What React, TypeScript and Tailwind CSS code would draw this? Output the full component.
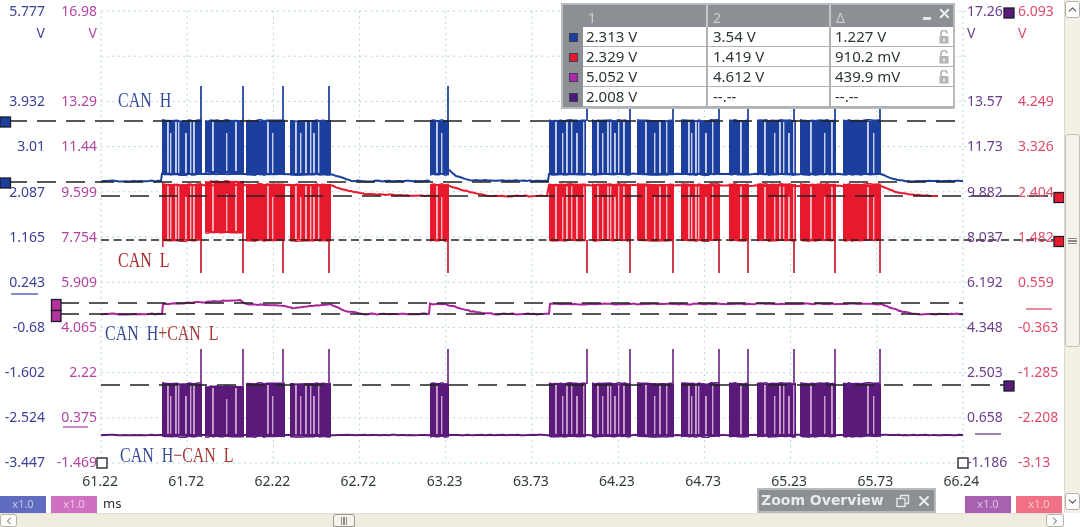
import { ChevronDown, ChevronLeft, ChevronRight, ChevronUp, X } from "lucide-react";

type Burst = { x0: number; x1: number; spike?: number; slits: number[]; lift?: number };

const bursts: Burst[] = [
  { x0: 162, x1: 202, spike: 201, slits: [167, 170, 175, 178, 185, 190, 193] },
  { x0: 205, x1: 244, spike: 243, slits: [212, 226, 235], lift: 1 },
  { x0: 246, x1: 285, spike: 283, slits: [267, 272] },
  { x0: 290, x1: 331, spike: 329, slits: [295, 300, 305, 310, 313, 318] },
  { x0: 430, x1: 449, spike: 448, slits: [436, 441] },
  { x0: 549, x1: 586, spike: 587, slits: [555, 562, 566, 571, 576, 583] },
  { x0: 592, x1: 631, spike: 630, slits: [597, 602, 607, 610, 614, 618, 623] },
  { x0: 637, x1: 674, spike: 673, slits: [645, 654, 659, 666] },
  { x0: 681, x1: 720, spike: 719, slits: [688, 691, 695, 698, 705, 712] },
  { x0: 729, x1: 749, spike: 748, slits: [740] },
  { x0: 757, x1: 796, spike: 794, slits: [764, 774, 779, 783, 788, 793] },
  { x0: 800, x1: 836, spike: 835, slits: [810, 824, 831] },
  { x0: 843, x1: 881, spike: 880, slits: [867, 873] },
];

const noise = (i: number) => {
  const n = Math.sin(i * 12.9898) * 43758.5453;
  return n - Math.floor(n) - 0.5;
};

// sample a line through the knots with a bit of wobble, the trace is never clean
const wobble = (pts: number[][], amp = 0.9) => {
  const out: string[] = [];
  pts.forEach((p, k) => {
    const q = pts[k + 1];
    if (!q) {
      out.push(`${p[0]},${p[1]}`);
      return;
    }
    for (let x = p[0]; x < q[0]; x += 3) {
      const y = p[1] + ((q[1] - p[1]) * (x - p[0])) / (q[0] - p[0]);
      out.push(`${x},${(y + noise(x + k) * amp).toFixed(1)}`);
    }
  });
  return out.join(" ");
};

const gridX = Array.from({ length: 11 }, (_, i) => 101 + i * 86.2);
const gridY = Array.from({ length: 11 }, (_, i) => 11 + i * 45.2);

const leftBlue = ["5.777", "", "3.932", "3.01", "2.087", "1.165", "0.243", "-0.68", "-1.602", "-2.524", "-3.447"];
const leftPink = ["16.98", "", "13.29", "11.44", "9.599", "7.754", "5.909", "4.065", "2.22", "0.375", "-1.469"];
const rightPurple = ["17.26", "", "13.57", "11.73", "9.882", "8.037", "6.192", "4.348", "2.503", "0.658", "-1.186"];
const rightRed = ["6.093", "", "4.249", "3.326", "2.404", "1.482", "0.559", "-0.363", "-1.285", "-2.208", "-3.13"];

const times = ["61.22", "61.72", "62.22", "62.72", "63.23", "63.73", "64.23", "64.73", "65.23", "65.73", "66.24"];

const rows = [
  { color: "bg-[#1c3f9e]", a: "2.313 V", b: "3.54 V", c: "1.227 V", lock: true },
  { color: "bg-[#e8192c]", a: "2.329 V", b: "1.419 V", c: "910.2 mV", lock: true },
  { color: "bg-[#b02aa8]", a: "5.052 V", b: "4.612 V", c: "439.9 mV", lock: true },
  { color: "bg-[#4a1a78]", a: "2.008 V", b: "--.--", c: "--.--", lock: false },
];

function AxisColumn({ values, className, unit }: { values: string[]; className: string; unit?: boolean }) {
  return (
    <div className={`flex shrink-0 flex-col text-[14px] leading-[22px] ${className}`}>
      {values.map((v, i) => (
        <div key={i} className="h-[45.15px] shrink-0 last:h-[22px]">
          <div>{v || "\u00a0"}</div>
          {unit && i === 0 && <div>V</div>}
        </div>
      ))}
    </div>
  );
}

function Pill({ className }: { className: string }) {
  return (
    <div className={`flex h-[17px] w-[46px] items-center justify-center text-[11px] text-white/60 ${className}`}>x1.0</div>
  );
}

function Lock() {
  return (
    <svg width="10" height="14" viewBox="0 0 10 14" className="shrink-0">
      <path d="M2 6V3.5a3 3 0 0 1 6 0" fill="none" stroke="#b4b4b4" strokeWidth="1.6" />
      <rect x="0.5" y="6" width="9" height="7.5" fill="#b4b4b4" />
      <rect x="4" y="8.5" width="2" height="3" fill="#e8e8e8" />
    </svg>
  );
}

function Trace({
  top,
  bottom,
  fill,
  slit,
  spikeTo,
  spikeColor,
  lift,
}: {
  top: number;
  bottom: number;
  fill: string;
  slit: string;
  spikeTo: number;
  spikeColor: string;
  lift: [number, number];
}) {
  return (
    <g>
      {bursts.map((b) => {
        const t = top + (b.lift ? lift[0] : 0);
        const e = bottom + (b.lift ? lift[1] : 0);
        const up = spikeTo < t;
        return (
          <g key={b.x0}>
            <rect x={b.x0} y={t} width={b.x1 - b.x0} height={e - t} fill={fill} />
            {b.slits.map((s, i) => (
              <rect
                key={s}
                x={s}
                y={i % 3 === 1 ? t + 12 : t + 1}
                width={i % 2 ? 1.4 : 1.9}
                height={e - t - (i % 3 === 1 ? 13 : 2)}
                fill={slit}
              />
            ))}
            <polyline fill="none" stroke={fill} strokeWidth="1.6" points={wobble([[b.x0, t - 0.5], [b.x1, t - 0.5]], 1.4)} />
            <polyline fill="none" stroke={fill} strokeWidth="1.6" points={wobble([[b.x0, e + 0.5], [b.x1, e + 0.5]], 1.4)} />
            {b.spike && (
              <rect
                x={b.spike - 0.9}
                y={up ? spikeTo : e}
                width="1.8"
                height={up ? t - spikeTo : spikeTo - e}
                fill={spikeColor}
              />
            )}
          </g>
        );
      })}
    </g>
  );
}

function Plot() {
  return (
    <svg width="866" height="473" viewBox="100 0 866 473" className="shrink-0 overflow-visible">
      {gridY.map((y) => (
        <line key={y} x1="101" x2="968" y1={y} y2={y} stroke="#b4d6dd" strokeDasharray="2 3.5" />
      ))}
      {gridX.map((x) => (
        <line key={x} x1={x} x2={x} y1="11" y2="463" stroke="#b4d6dd" strokeDasharray="2 3.5" />
      ))}

      {/* CAN H */}
      <Trace top={121} bottom={174} fill="#1c3f9e" slit="#c6d0ea" spikeTo={86} spikeColor="#24479f" lift={[0, -2]} />
      <polyline
        fill="none"
        stroke="#1c3f9e"
        strokeWidth="2"
        points={wobble([[101, 181], [162, 181], [162, 174], [330, 174], [340, 177], [352, 181], [430, 181]])}
      />
      <polyline fill="none" stroke="#1c3f9e" strokeWidth="2" points={wobble([[449, 170], [456, 176], [470, 180], [549, 181], [549, 174], [881, 174], [892, 179], [905, 181], [963, 181]])} />

      {/* CAN L */}
      <Trace top={185} bottom={240} fill="#e8192c" slit="#f3b4bb" spikeTo={273} spikeColor="#c9283e" lift={[-3, -8]} />
      <polyline fill="none" stroke="#e8192c" strokeWidth="2" points={wobble([[162, 185], [330, 185], [345, 190], [365, 194], [430, 196]])} />
      <polyline fill="none" stroke="#e8192c" strokeWidth="2" points={wobble([[449, 186], [470, 192], [490, 196], [549, 196], [549, 185], [881, 186], [895, 192], [915, 195], [938, 196]])} />
      <rect x="162" y="240" width="1.6" height="7" fill="#c9283e" />

      {/* CAN H+CAN L */}
      <polyline
        fill="none"
        stroke="#a8259c"
        strokeWidth="2"
        points={wobble([[101, 314], [162, 314], [163, 304], [205, 302], [240, 300], [246, 304], [285, 306], [292, 308], [330, 304], [345, 311], [365, 314], [429, 314], [430, 304], [445, 304], [470, 311], [495, 314], [549, 314], [550, 304], [881, 304], [900, 311], [915, 314], [963, 314]])}
      />

      {/* CAN H-CAN L */}
      <Trace top={384} bottom={436} fill="#5a1a7a" slit="#c9a0cc" spikeTo={349} spikeColor="#7c3a90" lift={[3, 0]} />
      <polyline fill="none" stroke="#5a1a7a" strokeWidth="2" points={wobble([[101, 435], [963, 435]], 0.6)} />

      {/* cursors */}
      <g stroke="#222" strokeWidth="1.5" fill="none">
        <line x1="8" x2="963" y1="121" y2="121" strokeDasharray="19 10" />
        <line x1="8" x2="963" y1="182" y2="182" strokeDasharray="19 10" />
        <line x1="101" x2="1055" y1="196" y2="196" strokeDasharray="19 10" />
        <line x1="101" x2="1055" y1="240" y2="240" strokeDasharray="8 4.5" />
        <line x1="60" x2="963" y1="303" y2="303" strokeDasharray="19 10" />
        <line x1="60" x2="963" y1="314" y2="314" strokeDasharray="19 10" />
        <line x1="101" x2="1006" y1="385" y2="385" strokeDasharray="19 10" />
      </g>
      <g stroke="#1b1b2a" strokeWidth="1.3">
        <rect x="0" y="117" width="10.5" height="10" fill="#1c3f9e" />
        <rect x="0" y="178" width="10.5" height="10" fill="#1c3f9e" />
        <rect x="51.5" y="299.5" width="9.5" height="11" fill="#b5339f" />
        <rect x="51.5" y="310.5" width="9.5" height="11" fill="#b5339f" />
        <rect x="1054" y="192.5" width="10" height="10" fill="#e8192c" />
        <rect x="1054" y="236.5" width="10" height="10" fill="#e8192c" />
        <rect x="1004" y="381" width="10" height="10" fill="#5a1a7a" />
        <rect x="1004" y="8" width="10" height="10" fill="#5a1a7a" />
        <rect x="97" y="458" width="10" height="10" fill="#fff" />
        <rect x="958" y="458" width="10" height="10" fill="#fff" />
      </g>

      {/* trigger level marks */}
      <line x1="11" x2="38" y1="294" y2="294" stroke="#3b4fb0" strokeWidth="1.3" />
      <line x1="63" x2="88" y1="427" y2="427" stroke="#b4459f" strokeWidth="1.3" />
      <line x1="975" x2="1001" y1="434" y2="434" stroke="#6b3d8c" strokeWidth="1.3" />
      <line x1="1026" x2="1052" y1="309" y2="309" stroke="#df4b68" strokeWidth="1.3" />

      <g fontFamily="'Liberation Serif', serif" fontSize="21">
        <text transform="translate(118 107) scale(0.76 1)" fill="#3a4a9a">CAN{"\u00a0\u00a0"}H</text>
        <text transform="translate(118 267) scale(0.76 1)" fill="#a82a2a">CAN{"\u00a0\u00a0"}L</text>
        <text transform="translate(105 340) scale(0.76 1)">
          <tspan fill="#3a4a9a">CAN{"\u00a0\u00a0"}H</tspan>
          <tspan fill="#a83a3a">+CAN{"\u00a0\u00a0"}L</tspan>
        </text>
        <text transform="translate(120 462) scale(0.76 1)">
          <tspan fill="#3a4a9a">CAN{"\u00a0\u00a0"}H</tspan>
          <tspan fill="#a83a3a">−CAN{"\u00a0\u00a0"}L</tspan>
        </text>
      </g>
    </svg>
  );
}

function CursorTable() {
  return (
    <div className="absolute left-[561px] top-[3px] w-[394px] border-2 border-[#b9bcbf] bg-[#8c9094] text-[15px] leading-[19px] text-[#2b3538]">
      <div className="grid h-[22px] grid-cols-[20px_123px_123px_1fr] text-[14px] leading-[26px] text-[#c9cdd0]">
        <div />
        <div className="pl-[5px]">1</div>
        <div className="border-l-2 border-[#c5c8ca] pl-[5px]">2</div>
        <div className="flex items-start border-l-2 border-[#c5c8ca] pl-[5px]">
          <span>Δ</span>
          <div className="ml-auto mr-[1px] flex items-center gap-[6px] pt-[1px]">
            <div className="mt-[10px] h-[3px] w-[8px] bg-[#e6e8e9]" />
            <X size={15} strokeWidth={3} className="text-[#eef0f1]" />
          </div>
        </div>
      </div>
      {rows.map((r) => (
        <div key={r.a} className="grid h-[20px] grid-cols-[20px_123px_123px_1fr]">
          <div className="flex items-center justify-center">
            <div className={`size-[7px] outline outline-1 outline-[#3a3d55] ${r.color}`} />
          </div>
          <div className="border-b-2 border-[#aeb2b4] bg-white pl-[3px]">{r.a}</div>
          <div className="border-b-2 border-l-2 border-[#aeb2b4] bg-white pl-[5px]">{r.b}</div>
          <div className="flex items-center justify-between border-b-2 border-l-2 border-[#aeb2b4] bg-white pl-[4px] pr-[4px]">
            {r.c}
            {r.lock && <Lock />}
          </div>
        </div>
      ))}
    </div>
  );
}

export default function App() {
  return (
    <div className="relative flex h-[527px] w-[1080px] flex-col overflow-hidden bg-white font-['Noto_Sans',sans-serif] blur-[0.45px]">
      <div className="flex h-[513px]">
        <div className="flex w-[1064px] flex-col">
          <div className="flex h-[473px]">
            <AxisColumn values={leftBlue} unit className="w-[45px] text-right text-[#3b4199]" />
            <AxisColumn values={leftPink} unit className="w-[52px] text-right text-[#b4459f]" />
            <div className="w-[3px] shrink-0" />
            <Plot />
            <AxisColumn values={rightPurple} unit className="w-[52px] pl-[1px] text-[#6b3d8c]" />
            <AxisColumn values={rightRed} unit className="w-[46px] text-[#df4b68]" />
          </div>
          <div className="ml-[57px] flex h-[16px] text-[14px] leading-[16px] text-[#2f3a3e]">
            {times.map((t) => (
              <div key={t} className="w-[86.15px] text-center">{t}</div>
            ))}
          </div>
          <div className="mt-auto flex items-end text-[13px]">
            <Pill className="bg-[#5f6cc0]" />
            <Pill className="ml-[5px] bg-[#d070c0]" />
            <div className="ml-[6px] pb-[3px] leading-[14px] text-[#2b2b2b]">ms</div>
            <Pill className="ml-auto bg-[#a860b0]" />
            <Pill className="ml-[5px] mr-[2px] bg-[#f07085]" />
          </div>
        </div>
        <div className="flex w-[16px] flex-col border-l border-[#ded9cc] bg-[#f3efe4]">
          <div className="mt-[1px] flex h-[17px] items-center justify-center rounded-[3px] border border-[#b5b2a8] bg-white">
            <ChevronUp size={13} className="text-[#555]" />
          </div>
          <div className="mt-[116px] flex h-[213px] items-center justify-center rounded-[3px] border border-[#c4c0b4] bg-[#f5f2e9]">
            <div className="h-[6px] w-[9px] border-y-[3px] border-double border-[#8a8a8a]" />
          </div>
          <div className="mb-[3px] mt-auto flex h-[17px] items-center justify-center rounded-[3px] border border-[#b5b2a8] bg-white">
            <ChevronDown size={13} className="text-[#555]" />
          </div>
        </div>
      </div>

      <div className="flex h-[14px] w-[1064px] items-stretch border-t border-[#e3dfd2] bg-[#f1ece0]">
        <div className="flex w-[17px] items-center justify-center rounded-[3px] border border-[#b5b2a8] bg-white">
          <ChevronLeft size={12} className="text-[#555]" />
        </div>
        <div className="ml-[316px] flex w-[22px] items-center justify-center rounded-t-[3px] border border-[#9c9a92] bg-[#f5f2e9]">
          <div className="h-[8px] w-[6px] border-x-[3px] border-double border-[#8a8a8a]" />
        </div>
        <div className="ml-auto flex w-[18px] items-center justify-center rounded-[3px] border border-[#b5b2a8] bg-white">
          <ChevronRight size={12} className="text-[#555]" />
        </div>
      </div>

      <CursorTable />

      <div className="absolute left-[757px] top-[488px] flex h-[25px] w-[179px] items-center border-2 border-[#b9bcbf] bg-[#8c9094] pl-[2px] pr-[2px] font-['DejaVu_Sans',sans-serif] text-[14px] font-bold text-[#e8eaeb]">
        Zoom Overview
        <svg width="14" height="14" viewBox="0 0 14 14" className="ml-auto" fill="none" stroke="#e8eaeb" strokeWidth="1.3">
          <rect x="1" y="4.5" width="8" height="8" />
          <path d="M4.5 4.5V1.5h8v8H9" />
        </svg>
        <X size={16} strokeWidth={3} className="ml-[6px]" />
      </div>
    </div>
  );
}
